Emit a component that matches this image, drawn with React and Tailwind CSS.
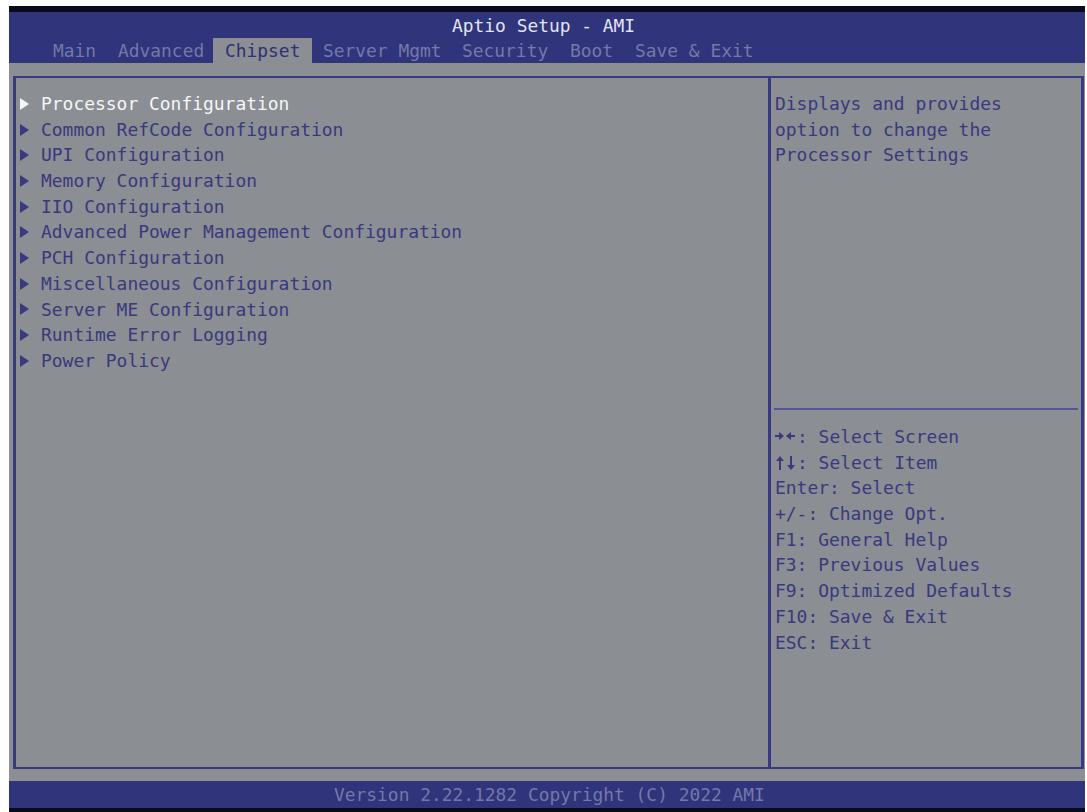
import clsx from 'clsx';

const tabs = [
  { name: 'Main', style: 'w-[64px] pl-[9px]' },
  { name: 'Advanced', style: 'w-[105px] pl-[10px]' },
  { name: 'Chipset', style: 'w-[99px] pl-[12px]' },
  { name: 'Server Mgmt', style: 'w-[140px] pl-[11px]' },
  { name: 'Security', style: 'w-[108px] pl-[10px]' },
  { name: 'Boot', style: 'w-[64px] pl-[10px]' },
  { name: 'Save & Exit', style: 'w-[140px] pl-[11px]' },
];

const menuItems = [
  'Processor Configuration',
  'Common RefCode Configuration',
  'UPI Configuration',
  'Memory Configuration',
  'IIO Configuration',
  'Advanced Power Management Configuration',
  'PCH Configuration',
  'Miscellaneous Configuration',
  'Server ME Configuration',
  'Runtime Error Logging',
  'Power Policy',
];

const helpText = [
  'Displays and provides',
  'option to change the',
  'Processor Settings',
];

const HorizontalArrows = () => (
  <svg viewBox="0 0 22 14" className="h-[14px] w-[22px] fill-current">
    <path d="M0 5H4V2L9 6L4 10V7H0Z" />
    <path d="M20 5H16V2L11 6L16 10V7H20Z" />
  </svg>
);

const VerticalArrows = () => (
  <svg viewBox="0 0 22 14" className="h-[14px] w-[22px] fill-current">
    <path d="M4 14V5H1L5 0L9 5H6V14Z" />
    <path d="M15 0V9H12L16 14L20 9H17V0Z" />
  </svg>
);

const hotkeys = [
  { keys: <HorizontalArrows />, label: 'Select Screen' },
  { keys: <VerticalArrows />, label: 'Select Item' },
  { keys: 'Enter', label: 'Select' },
  { keys: '+/-', label: 'Change Opt.' },
  { keys: 'F1', label: 'General Help' },
  { keys: 'F3', label: 'Previous Values' },
  { keys: 'F9', label: 'Optimized Defaults' },
  { keys: 'F10', label: 'Save & Exit' },
  { keys: 'ESC', label: 'Exit' },
];

const Header = ({ active }) => (
  <header className="h-[51px] bg-[#30347a]">
    <h1 className="h-[26px] pl-[443px] pt-px leading-[26px] text-[#e2e4f2]">
      Aptio Setup - AMI
    </h1>

    <nav className="flex pl-[35px]">
      {tabs.map((tab) => (
        <div
          key={tab.name}
          className={clsx(
            'h-[25px] shrink-0 leading-[26px]',
            tab.style,
            tab.name === active
              ? 'bg-[#8b8e92] text-[#2f3075]'
              : 'text-[#7478aa]'
          )}
        >
          {tab.name}
        </div>
      ))}
    </nav>
  </header>
);

const MenuItem = ({ label, selected }) => (
  <li
    className={clsx(
      'flex h-[25.7px] items-center leading-[25.7px]',
      selected ? 'text-[#f5f6f8]' : 'text-[#39397f]'
    )}
  >
    <svg viewBox="0 0 9 12" className="mr-3 h-3 w-[9px] fill-current">
      <path d="M0 0L9 6L0 12Z" />
    </svg>
    {label}
  </li>
);

const HelpPanel = () => (
  <aside className="flex flex-1 flex-col px-[3px] pt-[13px] text-[#39397f]">
    <div className="h-[317px]">
      {helpText.map((line) => (
        <p key={line} className="h-[25.7px] pl-px leading-[25.7px]">
          {line}
        </p>
      ))}
    </div>

    <div className="border-t-2 border-[#55569a] pl-px pt-[14px]">
      {hotkeys.map((item, index) => (
        <p key={index} className="flex h-[25.7px] items-center leading-[25.7px]">
          {item.keys}
          <span>: {item.label}</span>
        </p>
      ))}
    </div>
  </aside>
);

const App = () => {
  return (
    <div className="h-[812px] w-[1087px] overflow-hidden bg-white pl-[9px] pt-[6px]">
      <div className="flex h-[806px] w-[1076px] flex-col whitespace-pre border-b-4 border-t-[6px] border-[#090a1a] bg-[#8b8e92] font-['DejaVu_Sans_Mono',monospace] text-[17.9px]">
        <Header active="Chipset" />

        {/* Setup page */}
        <main className="mb-[12px] ml-1 mr-px mt-[13px] flex flex-1 border-x-[3px] border-y-2 border-[#38397f] text-[17.95px]">
          <ul className="w-[755px] border-r-[3px] border-[#38397f] pl-1 pt-[13px]">
            {menuItems.map((label, index) => (
              <MenuItem key={label} label={label} selected={index === 0} />
            ))}
          </ul>

          <HelpPanel />
        </main>

        <footer className="h-[27px] bg-[#30347a] pl-[325px] leading-[27px] text-[#7478aa]">
          Version 2.22.1282 Copyright (C) 2022 AMI
        </footer>
      </div>
    </div>
  );
};

export default App;
